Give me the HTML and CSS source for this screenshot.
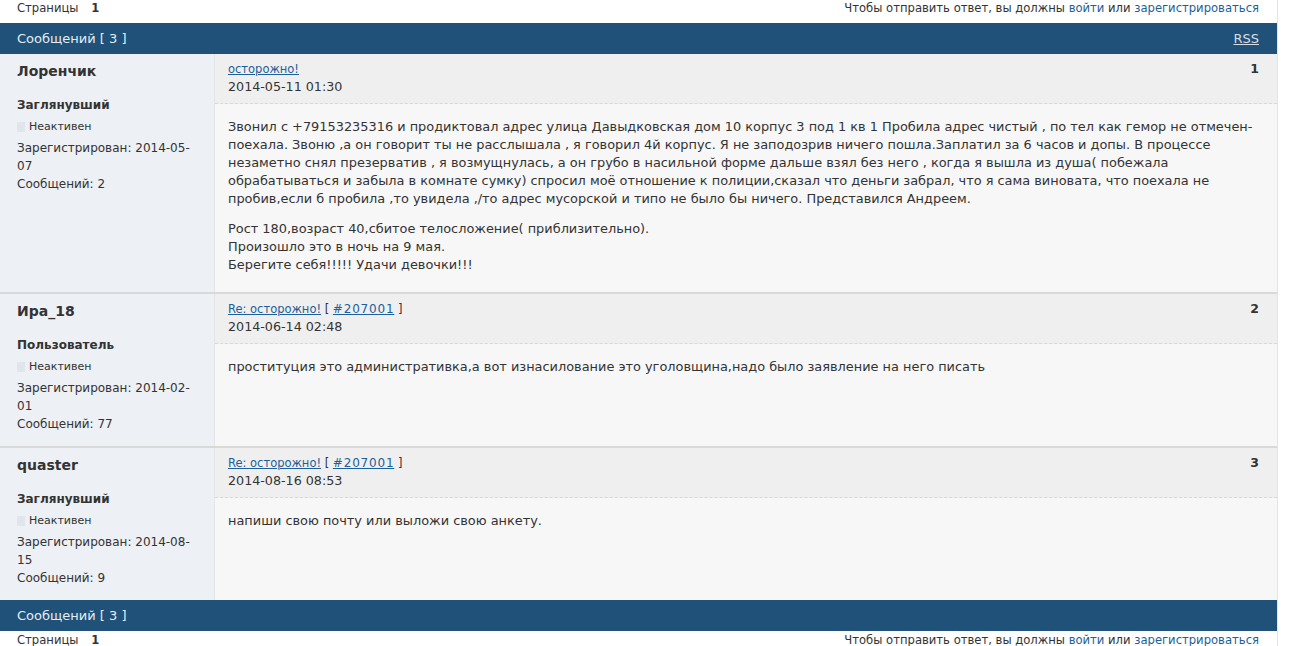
FILE: index.html
```html
<!doctype html>
<html lang="ru">
    <head>
        <meta charset="utf-8">
        <title>осторожно!</title>
        <link rel="stylesheet" href="styles.css">
    </head>
    <body>
        <div class="page">
            <div class="linkst">
                <div class="pagelink">Страницы <strong>1</strong></div>
                <div class="postlink">Чтобы отправить ответ, вы должны <a href="#">войти</a> или <a href="#">зарегистрироваться</a></div>
            </div>

            <div class="blocktable">
                <div class="hd">
                    <span>Сообщений [ 3 ]</span>
                    <a class="rss" href="#">RSS</a>
                </div>

                <!-- post 1 -->
                <div class="post">
                    <div class="postleft">
                        <div class="username">Лоренчик</div>
                        <div class="usertitle">Заглянувший</div>
                        <div class="status"><span class="dot"></span>Неактивен</div>
                        <div class="info">Зарегистрирован: 2014-05-07</div>
                        <div class="info">Сообщений: 2</div>
                    </div>
                    <div class="postright">
                        <div class="posthead">
                            <div>
                                <span class="subject"><a href="#">осторожно!</a></span><br>
                                <span class="date">2014-05-11 01:30</span>
                            </div>
                            <span class="postnum">1</span>
                        </div>
                        <div class="postmsg">
                            <p>Звонил с +79153235316 и продиктовал адрес улица Давыдковская дом 10 корпус 3 под 1 кв 1 Пробила адрес чистый , по тел как гемор не отмечен-поехала. Звоню ,а он говорит ты не расслышала , я говорил 4й корпус. Я не заподозрив ничего пошла.Заплатил за 6 часов и допы. В процессе незаметно снял презерватив , я возмущнулась, а он грубо в насильной форме дальше взял без него , когда я вышла из душа( побежала обрабатываться и забыла в комнате сумку) спросил моё отношение к полиции,сказал что деньги забрал, что я сама виновата, что поехала не пробив,если б пробила ,то увидела ,/то адрес мусорской и типо не было бы ничего. Представился Андреем.</p>
                            <p>Рост 180,возраст 40,сбитое телосложение( приблизительно).<br>
                            Произошло это в ночь на 9 мая.<br>
                            Берегите себя!!!!! Удачи девочки!!!</p>
                        </div>
                    </div>
                </div>

                <!-- post 2 -->
                <div class="post">
                    <div class="postleft">
                        <div class="username">Ира_18</div>
                        <div class="usertitle">Пользователь</div>
                        <div class="status"><span class="dot"></span>Неактивен</div>
                        <div class="info">Зарегистрирован: 2014-02-01</div>
                        <div class="info">Сообщений: 77</div>
                    </div>
                    <div class="postright">
                        <div class="posthead">
                            <div>
                                <span class="subject"><a href="#">Re: осторожно!</a> [ <a class="postid" href="#">#207001</a> ]</span><br>
                                <span class="date">2014-06-14 02:48</span>
                            </div>
                            <span class="postnum">2</span>
                        </div>
                        <div class="postmsg">
                            <p>проституция это административка,а вот изнасилование это уголовщина,надо было заявление на него писать</p>
                        </div>
                    </div>
                </div>

                <!-- post 3 -->
                <div class="post">
                    <div class="postleft">
                        <div class="username">quaster</div>
                        <div class="usertitle">Заглянувший</div>
                        <div class="status"><span class="dot"></span>Неактивен</div>
                        <div class="info">Зарегистрирован: 2014-08-15</div>
                        <div class="info">Сообщений: 9</div>
                    </div>
                    <div class="postright">
                        <div class="posthead">
                            <div>
                                <span class="subject"><a href="#">Re: осторожно!</a> [ <a class="postid" href="#">#207001</a> ]</span><br>
                                <span class="date">2014-08-16 08:53</span>
                            </div>
                            <span class="postnum">3</span>
                        </div>
                        <div class="postmsg">
                            <p>напиши свою почту или выложи свою анкету.</p>
                        </div>
                    </div>
                </div>

                <div class="hd">
                    <span>Сообщений [ 3 ]</span>
                </div>
            </div>

            <div class="linkst">
                <div class="pagelink">Страницы <strong>1</strong></div>
                <div class="postlink">Чтобы отправить ответ, вы должны <a href="#">войти</a> или <a href="#">зарегистрироваться</a></div>
            </div>
        </div>
    </body>
</html>
```

FILE: styles.css
```css
body {
    font-family: "DejaVu Sans", Verdana, sans-serif;
    font-size: 12px;
    line-height: 18px;
    color: #333;
    background: #fff;
    margin: 0;
    padding: 0;
}
a {
    color: #1c5f9a;
}
.page {
    width: 1277px;
    border-right: 1px solid #e4e4e4;
    margin-top: -1px;
}
.linkst {
    display: flex;
    justify-content: space-between;
    height: 24px;
    padding: 0 18px 0 17px;
    font-size: 11.6px;
}
.linkst strong {
    margin-left: 9px;
}
.postlink a {
    text-decoration: none;
}
.hd {
    display: flex;
    justify-content: space-between;
    align-items: center;
    height: 31px;
    padding: 0 18px 0 17px;
    background: #205279;
    color: #e6edf4;
    font-size: 13px;
}
.hd .rss {
    color: #d8dde3;
}
.post {
    display: grid;
    grid-template-columns: 215px 1fr;
    border-bottom: 2px solid #d9d9d9;
}
.post:nth-last-child(2) {
    border-bottom: none;
}
.postleft {
    background: #edf0f5;
    border-right: 1px solid #e2e5ea;
    padding: 8px 12px 13px 17px;
}
.username {
    font-size: 14px;
    font-weight: bold;
}
.usertitle {
    font-weight: bold;
    margin-top: 16px;
}
.status {
    margin-top: 4px;
    display: flex;
    align-items: center;
    font-size: 11px;
}
.dot {
    display: inline-block;
    width: 8px;
    height: 10px;
    background: #e0e5eb;
    margin-right: 4px;
}
.status + .info {
    margin-top: 3px;
}
.postright {
    background: #f7f7f7;
    display: flex;
    flex-direction: column;
}
.posthead {
    display: flex;
    justify-content: space-between;
    background: #efefef;
    padding: 6px 18px 7px 13px;
    border-bottom: 1px dashed #d8d8d8;
}
.subject {
    font-size: 11.5px;
}
.subject .postid {
    font-size: 12px;
    letter-spacing: 0.8px;
}
.date {
    font-size: 12.7px;
}
.postnum {
    font-weight: bold;
    font-size: 12.5px;
}
.postmsg {
    padding: 14px 18px 18px 13px;
    font-size: 12.9px;
}
.postmsg p {
    margin: 0 0 12px;
}
.postmsg p:last-child {
    margin-bottom: 0;
}
```
